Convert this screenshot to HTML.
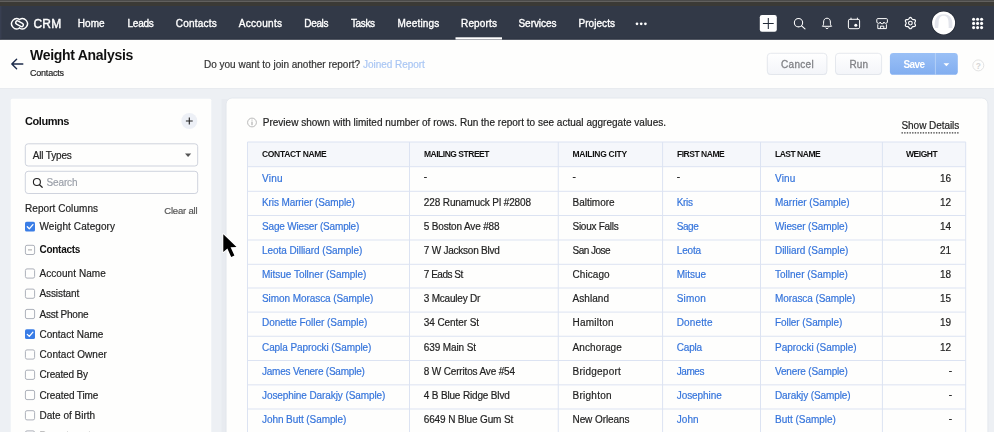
<!DOCTYPE html>
<html><head><meta charset="utf-8"><title>Weight Analysis</title>
<style>
html,body{margin:0;padding:0;}
body{width:994px;height:432px;overflow:hidden;background:#edf0f4;font-family:"Liberation Sans",sans-serif;position:relative;}
.t{position:absolute;white-space:nowrap;line-height:1.117;}
#txt{position:absolute;left:0;top:0;width:994px;height:432px;will-change:transform;}
#bg{position:absolute;left:0;top:0;}
</style></head><body>
<svg id="bg" width="994" height="432" viewBox="0 0 994 432">
<!-- top strip + nav -->
<rect x="0" y="0" width="994" height="1.3" fill="#4b4b4a"/>
<rect x="0" y="1.3" width="994" height="4.7" fill="#3b3a36"/>
<rect x="0" y="6" width="994" height="33.8" fill="#323947"/>
<rect x="0" y="6" width="1.5" height="33.8" fill="#383f51"/>
<rect x="0" y="38.9" width="994" height="0.9" fill="#1f2532"/>
<rect x="455.5" y="37.3" width="46.5" height="2.2" fill="#fff"/>
<!-- header -->
<rect x="0" y="39.8" width="994" height="48.4" fill="#fefefd"/>
<rect x="0" y="88" width="994" height="0.8" fill="#e6e9ee"/>
<!-- left panel -->
<rect x="10.75" y="98.75" width="200.5" height="340" rx="1.5" fill="#fefefd"/>
<!-- right panel -->
<rect x="221.5" y="99" width="8" height="340" fill="#e8ebf0"/>
<rect x="226.1" y="98" width="761.8" height="345" rx="6" fill="#fefefd" stroke="#e2e6ec" stroke-width="0.9"/>
<!-- table -->
<rect x="247.5" y="142" width="718.25" height="24.7" fill="#f5f7fb"/>
<g stroke="#dce3f2" stroke-width="1" fill="none">
<path d="M247.5 142H965.75M247.5 166.7H965.75"/>
<path d="M247.5 191.3H965.75M247.5 215.5H965.75M247.5 240.0H965.75M247.5 264.3H965.75M247.5 288.0H965.75M247.5 312.1H965.75M247.5 336.25H965.75M247.5 360.5H965.75M247.5 384.85H965.75M247.5 409.0H965.75"/>
<path d="M247.5 142V432M409.5 142V432M558.25 142V432M662.6 142V432M760.5 142V432M882.4 142V432M965.7 142V432"/>
</g>
<!-- show details dotted underline -->
<path d="M901.5 132.9H959.5" stroke="#3a3a3a" stroke-width="1.25" stroke-dasharray="1.4 1.25"/>
<!-- info icon -->
<circle cx="252" cy="122.5" r="4.4" fill="none" stroke="#a8a8a8" stroke-width="0.8"/>
<path d="M252 121.6V125.2M252 119.7V120.5" stroke="#999" stroke-width="0.9"/>
<!-- back arrow -->
<path d="M22.8 64H11.8M16.6 59.2L11.8 64L16.6 68.8" stroke="#1c2b4a" stroke-width="1.4" fill="none" stroke-linecap="round" stroke-linejoin="round"/>
<!-- buttons -->
<defs>
<linearGradient id="gb" x1="0" y1="0" x2="0" y2="1"><stop offset="0" stop-color="#ffffff"/><stop offset="1" stop-color="#f3f5f9"/></linearGradient>
<linearGradient id="gs" x1="0" y1="0" x2="0" y2="1"><stop offset="0" stop-color="#9ac0f6"/><stop offset="1" stop-color="#82aef0"/></linearGradient>
</defs>
<rect x="767.3" y="53.9" width="59.6" height="21.2" rx="3.4" fill="#eceef3"/>
<rect x="835.5" y="53.9" width="46.1" height="21.2" rx="3.4" fill="#eceef3"/>
<rect x="767.3" y="53.3" width="59.6" height="21.2" rx="3.4" fill="url(#gb)" stroke="#e0e3ea" stroke-width="0.8"/>
<rect x="835.5" y="53.3" width="46.1" height="21.2" rx="3.4" fill="url(#gb)" stroke="#e0e3ea" stroke-width="0.8"/>
<rect x="889.9" y="53" width="67.9" height="21.8" rx="3.4" fill="url(#gs)"/>
<path d="M935.4 53V74.8" stroke="#bdd5f8" stroke-width="0.8"/>
<path d="M943.5 63.2L946.4 66.3L949.3 63.2Z" fill="#fff"/>
<circle cx="978.3" cy="65.4" r="5.5" fill="none" stroke="#dfdfdf" stroke-width="0.9"/>
<text x="978.3" y="68.6" font-size="8.5" text-anchor="middle" fill="#d6d6d6" font-family="Liberation Sans" font-weight="700">?</text>
<!-- logo -->
<g fill="none" stroke="#fff" stroke-width="1.45" stroke-linecap="round" transform="translate(0.1,0.45)">
<path d="M19.4 19.04 A5.1 5.1 0 1 0 19.4 27.56"/>
<path d="M19.4 19.04 A5.1 5.1 0 1 1 19.4 27.56"/>
<rect x="15.3" y="21.6" width="8.2" height="3.4" rx="1.7" transform="rotate(30 19.4 23.3)"/>
</g>
<!-- nav dots -->
<circle cx="637" cy="23.8" r="1.35" fill="#fff"/><circle cx="641.2" cy="23.8" r="1.35" fill="#fff"/><circle cx="645.4" cy="23.8" r="1.35" fill="#fff"/>
<!-- plus btn -->
<rect x="759.8" y="15" width="17" height="16.8" rx="2.2" fill="#fff"/>
<path d="M768.3 18.1V28.9M762.9 23.5H773.7" stroke="#222a38" stroke-width="1.05"/>
<!-- search -->
<circle cx="798.5" cy="22.7" r="4.15" fill="none" stroke="#fff" stroke-width="1.05"/>
<path d="M801.6 25.8L805 28.9" stroke="#fff" stroke-width="1.15" stroke-linecap="round"/>
<!-- bell -->
<path d="M822.4 26.3 H831.6 C830.2 25 830.4 23.6 830.4 22 C830.4 19.6 829 18.2 827 18.2 C825 18.2 823.6 19.6 823.6 22 C823.6 23.6 823.8 25 822.4 26.3Z" fill="none" stroke="#fff" stroke-width="1" stroke-linejoin="round"/>
<path d="M825.4 27.6 a1.7 1.4 0 0 0 3.2 0" fill="none" stroke="#fff" stroke-width="1"/>
<!-- calendar -->
<rect x="848.4" y="19.3" width="11.2" height="9.4" rx="1.5" fill="none" stroke="#fff" stroke-width="1"/>
<path d="M851 17.7V19.6M857.4 17.7V19.6" stroke="#fff" stroke-width="1"/>
<circle cx="855.8" cy="25.3" r="1.55" fill="#fff"/>
<!-- store -->
<path d="M876.8 22V19.6 a1 1 0 0 1 1-1 H886.4 a1 1 0 0 1 1 1 V22 a1.8 1.8 0 0 1-3.5 0 a1.8 1.8 0 0 1-3.6 0 a1.8 1.8 0 0 1-3.5 0Z" fill="none" stroke="#fff" stroke-width="1"/>
<path d="M877.8 24.3V28.6H886.4V24.3M880.4 28.6V26.2H883.8V28.6" fill="none" stroke="#fff" stroke-width="1"/>
<!-- gear -->
<path d="M914.65 23.10 L914.73 22.72 L914.93 22.30 L915.18 21.82 L915.38 21.29 L915.44 20.75 L915.29 20.28 L914.95 19.91 L914.46 19.69 L913.90 19.60 L913.36 19.58 L912.89 19.54 L912.52 19.42 L912.24 19.16 L911.97 18.78 L911.68 18.32 L911.32 17.88 L910.88 17.56 L910.40 17.45 L909.92 17.56 L909.48 17.88 L909.12 18.32 L908.83 18.78 L908.56 19.16 L908.27 19.42 L907.91 19.54 L907.44 19.58 L906.90 19.60 L906.34 19.69 L905.85 19.91 L905.51 20.28 L905.36 20.75 L905.42 21.29 L905.62 21.82 L905.87 22.30 L906.07 22.72 L906.15 23.10 L906.07 23.48 L905.87 23.90 L905.62 24.38 L905.42 24.91 L905.36 25.45 L905.51 25.93 L905.85 26.29 L906.34 26.51 L906.90 26.60 L907.44 26.62 L907.91 26.66 L908.27 26.78 L908.56 27.04 L908.83 27.42 L909.12 27.88 L909.48 28.32 L909.92 28.64 L910.40 28.75 L910.88 28.64 L911.32 28.32 L911.68 27.88 L911.97 27.42 L912.24 27.04 L912.52 26.78 L912.89 26.66 L913.36 26.62 L913.90 26.60 L914.46 26.51 L914.95 26.29 L915.29 25.93 L915.44 25.45 L915.38 24.91 L915.18 24.38 L914.93 23.90 L914.73 23.48Z" fill="none" stroke="#fff" stroke-width="1.2" stroke-linejoin="round"/>
<circle cx="910.4" cy="23.1" r="1.85" fill="none" stroke="#fff" stroke-width="1.15"/>
<!-- avatar -->
<circle cx="943.6" cy="22.9" r="12.2" fill="#1f2532"/>
<circle cx="943.6" cy="22.9" r="11.5" fill="#fff"/>
<path d="M934.9 28 C934 20 936 14.2 943.6 14.2 C951.2 14.2 953.2 20 952.3 28 L948.6 28 C948.9 26 948.5 25 948.5 22 C948.5 18.4 946.8 15.7 943.6 15.7 C940.4 15.7 938.7 18.4 938.7 22 C938.7 25 938.3 26 938.2 28 Z" fill="#e3e5ec"/>
<!-- grid -->
<g fill="#fff">
<circle cx="973.6" cy="19.2" r="1.55"/><circle cx="977.6" cy="19.2" r="1.55"/><circle cx="981.6" cy="19.2" r="1.55"/><circle cx="973.6" cy="23.4" r="1.55"/><circle cx="977.6" cy="23.4" r="1.55"/><circle cx="981.6" cy="23.4" r="1.55"/><circle cx="973.6" cy="27.6" r="1.55"/><circle cx="977.6" cy="27.6" r="1.55"/><circle cx="981.6" cy="27.6" r="1.55"/>
</g>
<!-- sidebar widgets -->
<circle cx="189.3" cy="121" r="8" fill="#edf0f6"/>
<path d="M189.3 117.6V124.4M185.9 121H192.7" stroke="#222" stroke-width="1.1"/>
<rect x="25.3" y="143.8" width="172.4" height="22.2" rx="2.8" fill="#fefefd" stroke="#c9ced9" stroke-width="0.9"/>
<path d="M185 153.6L188.1 157L191.2 153.6Z" fill="#555"/>
<rect x="25.3" y="171.3" width="172.4" height="22.2" rx="2.8" fill="#fefefd" stroke="#c9ced9" stroke-width="0.9"/>
<circle cx="36.9" cy="182" r="3.5" fill="none" stroke="#222" stroke-width="1.1"/>
<path d="M39.5 184.7L42.2 187.3" stroke="#222" stroke-width="1.2" stroke-linecap="round"/>
<!-- checkboxes -->
<g>
<rect x="25" y="221.7" width="10" height="9.8" rx="1.6" fill="#3a7de6"/>
<path d="M27.3 226.8L29.3 228.8L32.9 224.6" fill="none" stroke="#fff" stroke-width="1.3" stroke-linecap="round" stroke-linejoin="round"/>
<rect x="25.4" y="245.3" width="9.2" height="9.2" rx="1.6" fill="#fefefd" stroke="#adb1ba" stroke-width="1"/>
<path d="M28 249.9H32" stroke="#999" stroke-width="0.9"/>
<rect x="25" y="329.3" width="10" height="9.8" rx="1.6" fill="#3a7de6"/>
<path d="M27.3 334.4L29.3 336.4L32.9 332.2" fill="none" stroke="#fff" stroke-width="1.3" stroke-linecap="round" stroke-linejoin="round"/>
</g>
<g fill="#fefefd" stroke="#adb1ba" stroke-width="1">
<rect x="25.4" y="268.9" width="9.2" height="9.2" rx="1.6"/>
<rect x="25.4" y="289.1" width="9.2" height="9.2" rx="1.6"/>
<rect x="25.4" y="309.4" width="9.2" height="9.2" rx="1.6"/>
<rect x="25.4" y="349.9" width="9.2" height="9.2" rx="1.6"/>
<rect x="25.4" y="370.2" width="9.2" height="9.2" rx="1.6"/>
<rect x="25.4" y="390.4" width="9.2" height="9.2" rx="1.6"/>
<rect x="25.4" y="410.7" width="9.2" height="9.2" rx="1.6"/>
<rect x="25.4" y="430.9" width="9.2" height="9.2" rx="1.6"/>
</g>
</svg>
<div id="txt">
<span class="t" id="t0" style="left:77.75px;top:17.83px;font-size:10px;font-weight:400;color:#fff;letter-spacing:0.046px;-webkit-text-stroke:0.35px #fff;">Home</span>
<span class="t" id="t1" style="left:127.50px;top:17.83px;font-size:10px;font-weight:400;color:#fff;letter-spacing:-0.249px;-webkit-text-stroke:0.35px #fff;">Leads</span>
<span class="t" id="t2" style="left:175.75px;top:17.83px;font-size:10px;font-weight:400;color:#fff;letter-spacing:0.220px;-webkit-text-stroke:0.35px #fff;">Contacts</span>
<span class="t" id="t3" style="left:238.75px;top:17.83px;font-size:10px;font-weight:400;color:#fff;letter-spacing:0.302px;-webkit-text-stroke:0.35px #fff;">Accounts</span>
<span class="t" id="t4" style="left:304.25px;top:17.83px;font-size:10px;font-weight:400;color:#fff;letter-spacing:-0.329px;-webkit-text-stroke:0.35px #fff;">Deals</span>
<span class="t" id="t5" style="left:351.00px;top:17.83px;font-size:10px;font-weight:400;color:#fff;letter-spacing:-0.390px;-webkit-text-stroke:0.35px #fff;">Tasks</span>
<span class="t" id="t6" style="left:397.50px;top:17.83px;font-size:10px;font-weight:400;color:#fff;letter-spacing:0.168px;-webkit-text-stroke:0.35px #fff;">Meetings</span>
<span class="t" id="t7" style="left:461.00px;top:17.83px;font-size:10px;font-weight:400;color:#fff;letter-spacing:0.164px;-webkit-text-stroke:0.35px #fff;">Reports</span>
<span class="t" id="t8" style="left:518.50px;top:17.83px;font-size:10px;font-weight:400;color:#fff;letter-spacing:-0.049px;-webkit-text-stroke:0.35px #fff;">Services</span>
<span class="t" id="t9" style="left:578.50px;top:17.83px;font-size:10px;font-weight:400;color:#fff;letter-spacing:0.054px;-webkit-text-stroke:0.35px #fff;">Projects</span>
<span class="t" id="t10" style="left:33.40px;top:17.64px;font-size:12px;font-weight:400;color:#fff;letter-spacing:0.234px;-webkit-text-stroke:0.4px #fff;">CRM</span>
<span class="t" id="t11" style="left:30.00px;top:48.24px;font-size:14px;font-weight:700;color:#111;letter-spacing:-0.292px;">Weight Analysis</span>
<span class="t" id="t12" style="left:30.00px;top:68.38px;font-size:9px;font-weight:400;color:#222;letter-spacing:-0.217px;-webkit-text-stroke:0.18px #222;">Contacts</span>
<span class="t" id="t13" style="left:204.00px;top:58.53px;font-size:10px;font-weight:400;color:#333;letter-spacing:-0.004px;-webkit-text-stroke:0.18px #333;">Do you want to join another report?</span>
<span class="t" id="t14" style="left:363.00px;top:58.53px;font-size:10px;font-weight:400;color:#a9c6f3;letter-spacing:-0.040px;-webkit-text-stroke:0.18px #a9c6f3;">Joined Report</span>
<span class="t" id="t15" style="left:781.00px;top:58.53px;font-size:10px;font-weight:400;color:#818286;letter-spacing:0.319px;-webkit-text-stroke:0.3px #818286;">Cancel</span>
<span class="t" id="t16" style="left:849.50px;top:58.53px;font-size:10px;font-weight:400;color:#818286;letter-spacing:0.108px;-webkit-text-stroke:0.3px #818286;">Run</span>
<span class="t" id="t17" style="left:903.50px;top:58.53px;font-size:10px;font-weight:700;color:#fff;letter-spacing:-0.598px;">Save</span>
<span class="t" id="t18" style="left:25.00px;top:115.18px;font-size:11px;font-weight:700;color:#111;letter-spacing:-0.448px;">Columns</span>
<span class="t" id="t19" style="left:32.75px;top:149.53px;font-size:10px;font-weight:400;color:#222;letter-spacing:-0.165px;-webkit-text-stroke:0.18px #222;">All Types</span>
<span class="t" id="t20" style="left:46.50px;top:177.03px;font-size:10px;font-weight:400;color:#9a9fa8;letter-spacing:-0.125px;-webkit-text-stroke:0.18px #9a9fa8;">Search</span>
<span class="t" id="t21" style="left:25.00px;top:203.23px;font-size:10px;font-weight:400;color:#222;letter-spacing:0.058px;-webkit-text-stroke:0.18px #222;">Report Columns</span>
<span class="t" id="t22" style="left:164.25px;top:205.70px;font-size:9.5px;font-weight:400;color:#555;letter-spacing:-0.186px;-webkit-text-stroke:0.18px #555;">Clear all</span>
<span class="t" id="t23" style="left:39.50px;top:221.13px;font-size:10px;font-weight:400;color:#222;letter-spacing:0.086px;-webkit-text-stroke:0.18px #222;">Weight Category</span>
<span class="t" id="t24" style="left:39.50px;top:244.43px;font-size:10px;font-weight:700;color:#111;letter-spacing:-0.282px;">Contacts</span>
<span class="t" id="t25" style="left:39.50px;top:268.03px;font-size:10px;font-weight:400;color:#222;letter-spacing:0.066px;-webkit-text-stroke:0.18px #222;">Account Name</span>
<span class="t" id="t26" style="left:39.50px;top:288.13px;font-size:10px;font-weight:400;color:#222;letter-spacing:-0.099px;-webkit-text-stroke:0.18px #222;">Assistant</span>
<span class="t" id="t27" style="left:39.50px;top:308.53px;font-size:10px;font-weight:400;color:#222;letter-spacing:-0.231px;-webkit-text-stroke:0.18px #222;">Asst Phone</span>
<span class="t" id="t28" style="left:39.50px;top:328.73px;font-size:10px;font-weight:400;color:#222;letter-spacing:-0.009px;-webkit-text-stroke:0.18px #222;">Contact Name</span>
<span class="t" id="t29" style="left:39.50px;top:349.03px;font-size:10px;font-weight:400;color:#222;letter-spacing:0.053px;-webkit-text-stroke:0.18px #222;">Contact Owner</span>
<span class="t" id="t30" style="left:39.50px;top:369.33px;font-size:10px;font-weight:400;color:#222;letter-spacing:-0.169px;-webkit-text-stroke:0.18px #222;">Created By</span>
<span class="t" id="t31" style="left:39.50px;top:389.53px;font-size:10px;font-weight:400;color:#222;letter-spacing:-0.104px;-webkit-text-stroke:0.18px #222;">Created Time</span>
<span class="t" id="t32" style="left:39.50px;top:409.83px;font-size:10px;font-weight:400;color:#222;letter-spacing:-0.002px;-webkit-text-stroke:0.18px #222;">Date of Birth</span>
<span class="t" id="t33" style="left:39.50px;top:430.13px;font-size:10px;font-weight:400;color:#b5b5b5;letter-spacing:-0.108px;-webkit-text-stroke:0.18px #b5b5b5;">Department</span>
<span class="t" id="t34" style="left:262.75px;top:117.03px;font-size:10px;font-weight:400;color:#222;letter-spacing:0.010px;-webkit-text-stroke:0.18px #222;">Preview shown with limited number of rows. Run the report to see actual aggregate values.</span>
<span class="t" id="t35" style="left:901.50px;top:119.73px;font-size:10px;font-weight:400;color:#222;letter-spacing:-0.055px;-webkit-text-stroke:0.18px #222;">Show Details</span>
<span class="t" id="t36" style="left:262.00px;top:149.95px;font-size:8.5px;font-weight:700;color:#111;letter-spacing:-0.331px;">CONTACT NAME</span>
<span class="t" id="t37" style="left:424.00px;top:149.95px;font-size:8.5px;font-weight:700;color:#111;letter-spacing:-0.487px;">MAILING STREET</span>
<span class="t" id="t38" style="left:572.50px;top:149.95px;font-size:8.5px;font-weight:700;color:#111;letter-spacing:-0.267px;">MAILING CITY</span>
<span class="t" id="t39" style="left:677.00px;top:149.95px;font-size:8.5px;font-weight:700;color:#111;letter-spacing:-0.475px;">FIRST NAME</span>
<span class="t" id="t40" style="left:775.00px;top:149.95px;font-size:8.5px;font-weight:700;color:#111;letter-spacing:-0.489px;">LAST NAME</span>
<span class="t" id="t41" style="left:906.00px;top:149.95px;font-size:8.5px;font-weight:700;color:#111;letter-spacing:-0.461px;">WEIGHT</span>
<span class="t" id="t42" style="left:262.00px;top:172.53px;font-size:10px;font-weight:400;color:#3574db;letter-spacing:0.243px;-webkit-text-stroke:0.18px #3574db;">Vinu</span>
<span class="t" id="t43" style="left:423.75px;top:171.43px;font-size:10px;font-weight:400;color:#222;letter-spacing:0.000px;-webkit-text-stroke:0.18px #222;">-</span>
<span class="t" id="t44" style="left:572.50px;top:171.43px;font-size:10px;font-weight:400;color:#222;letter-spacing:0.000px;-webkit-text-stroke:0.18px #222;">-</span>
<span class="t" id="t45" style="left:676.75px;top:171.43px;font-size:10px;font-weight:400;color:#222;letter-spacing:0.000px;-webkit-text-stroke:0.18px #222;">-</span>
<span class="t" id="t46" style="left:775.00px;top:172.53px;font-size:10px;font-weight:400;color:#3574db;letter-spacing:0.159px;-webkit-text-stroke:0.18px #3574db;">Vinu</span>
<span class="t" id="t47" style="left:940.09px;top:172.53px;font-size:10px;font-weight:400;color:#222;letter-spacing:-0.150px;-webkit-text-stroke:0.18px #222;">16</span>
<span class="t" id="t48" style="left:262.00px;top:196.67px;font-size:10px;font-weight:400;color:#3574db;letter-spacing:-0.109px;-webkit-text-stroke:0.18px #3574db;">Kris Marrier (Sample)</span>
<span class="t" id="t49" style="left:423.75px;top:196.67px;font-size:10px;font-weight:400;color:#222;letter-spacing:-0.110px;-webkit-text-stroke:0.18px #222;">228 Runamuck Pl #2808</span>
<span class="t" id="t50" style="left:572.50px;top:196.67px;font-size:10px;font-weight:400;color:#222;letter-spacing:-0.022px;-webkit-text-stroke:0.18px #222;">Baltimore</span>
<span class="t" id="t51" style="left:676.75px;top:196.67px;font-size:10px;font-weight:400;color:#3574db;letter-spacing:-0.324px;-webkit-text-stroke:0.18px #3574db;">Kris</span>
<span class="t" id="t52" style="left:775.00px;top:196.67px;font-size:10px;font-weight:400;color:#3574db;letter-spacing:-0.029px;-webkit-text-stroke:0.18px #3574db;">Marrier (Sample)</span>
<span class="t" id="t53" style="left:940.09px;top:196.67px;font-size:10px;font-weight:400;color:#222;letter-spacing:-0.150px;-webkit-text-stroke:0.18px #222;">12</span>
<span class="t" id="t54" style="left:262.00px;top:220.81px;font-size:10px;font-weight:400;color:#3574db;letter-spacing:-0.172px;-webkit-text-stroke:0.18px #3574db;">Sage Wieser (Sample)</span>
<span class="t" id="t55" style="left:423.75px;top:220.81px;font-size:10px;font-weight:400;color:#222;letter-spacing:-0.164px;-webkit-text-stroke:0.18px #222;">5 Boston Ave #88</span>
<span class="t" id="t56" style="left:572.50px;top:220.81px;font-size:10px;font-weight:400;color:#222;letter-spacing:-0.266px;-webkit-text-stroke:0.18px #222;">Sioux Falls</span>
<span class="t" id="t57" style="left:676.75px;top:220.81px;font-size:10px;font-weight:400;color:#3574db;letter-spacing:-0.431px;-webkit-text-stroke:0.18px #3574db;">Sage</span>
<span class="t" id="t58" style="left:775.00px;top:220.81px;font-size:10px;font-weight:400;color:#3574db;letter-spacing:-0.116px;-webkit-text-stroke:0.18px #3574db;">Wieser (Sample)</span>
<span class="t" id="t59" style="left:940.09px;top:220.81px;font-size:10px;font-weight:400;color:#222;letter-spacing:-0.150px;-webkit-text-stroke:0.18px #222;">14</span>
<span class="t" id="t60" style="left:262.00px;top:244.95px;font-size:10px;font-weight:400;color:#3574db;letter-spacing:-0.063px;-webkit-text-stroke:0.18px #3574db;">Leota Dilliard (Sample)</span>
<span class="t" id="t61" style="left:423.75px;top:244.95px;font-size:10px;font-weight:400;color:#222;letter-spacing:-0.227px;-webkit-text-stroke:0.18px #222;">7 W Jackson Blvd</span>
<span class="t" id="t62" style="left:572.50px;top:244.95px;font-size:10px;font-weight:400;color:#222;letter-spacing:-0.519px;-webkit-text-stroke:0.18px #222;">San Jose</span>
<span class="t" id="t63" style="left:676.75px;top:244.95px;font-size:10px;font-weight:400;color:#3574db;letter-spacing:-0.178px;-webkit-text-stroke:0.18px #3574db;">Leota</span>
<span class="t" id="t64" style="left:775.00px;top:244.95px;font-size:10px;font-weight:400;color:#3574db;letter-spacing:-0.036px;-webkit-text-stroke:0.18px #3574db;">Dilliard (Sample)</span>
<span class="t" id="t65" style="left:940.09px;top:244.95px;font-size:10px;font-weight:400;color:#222;letter-spacing:-0.150px;-webkit-text-stroke:0.18px #222;">21</span>
<span class="t" id="t66" style="left:262.00px;top:269.09px;font-size:10px;font-weight:400;color:#3574db;letter-spacing:-0.021px;-webkit-text-stroke:0.18px #3574db;">Mitsue Tollner (Sample)</span>
<span class="t" id="t67" style="left:423.75px;top:269.09px;font-size:10px;font-weight:400;color:#222;letter-spacing:-0.479px;-webkit-text-stroke:0.18px #222;">7 Eads St</span>
<span class="t" id="t68" style="left:572.50px;top:269.09px;font-size:10px;font-weight:400;color:#222;letter-spacing:0.062px;-webkit-text-stroke:0.18px #222;">Chicago</span>
<span class="t" id="t69" style="left:676.75px;top:269.09px;font-size:10px;font-weight:400;color:#3574db;letter-spacing:-0.028px;-webkit-text-stroke:0.18px #3574db;">Mitsue</span>
<span class="t" id="t70" style="left:775.00px;top:269.09px;font-size:10px;font-weight:400;color:#3574db;letter-spacing:0.002px;-webkit-text-stroke:0.18px #3574db;">Tollner (Sample)</span>
<span class="t" id="t71" style="left:940.09px;top:269.09px;font-size:10px;font-weight:400;color:#222;letter-spacing:-0.150px;-webkit-text-stroke:0.18px #222;">18</span>
<span class="t" id="t72" style="left:262.00px;top:293.23px;font-size:10px;font-weight:400;color:#3574db;letter-spacing:-0.071px;-webkit-text-stroke:0.18px #3574db;">Simon Morasca (Sample)</span>
<span class="t" id="t73" style="left:423.75px;top:293.23px;font-size:10px;font-weight:400;color:#222;letter-spacing:-0.211px;-webkit-text-stroke:0.18px #222;">3 Mcauley Dr</span>
<span class="t" id="t74" style="left:572.50px;top:293.23px;font-size:10px;font-weight:400;color:#222;letter-spacing:0.071px;-webkit-text-stroke:0.18px #222;">Ashland</span>
<span class="t" id="t75" style="left:676.75px;top:293.23px;font-size:10px;font-weight:400;color:#3574db;letter-spacing:0.179px;-webkit-text-stroke:0.18px #3574db;">Simon</span>
<span class="t" id="t76" style="left:775.00px;top:293.23px;font-size:10px;font-weight:400;color:#3574db;letter-spacing:-0.091px;-webkit-text-stroke:0.18px #3574db;">Morasca (Sample)</span>
<span class="t" id="t77" style="left:940.09px;top:293.23px;font-size:10px;font-weight:400;color:#222;letter-spacing:-0.150px;-webkit-text-stroke:0.18px #222;">15</span>
<span class="t" id="t78" style="left:262.00px;top:317.37px;font-size:10px;font-weight:400;color:#3574db;letter-spacing:-0.037px;-webkit-text-stroke:0.18px #3574db;">Donette Foller (Sample)</span>
<span class="t" id="t79" style="left:423.75px;top:317.37px;font-size:10px;font-weight:400;color:#222;letter-spacing:-0.079px;-webkit-text-stroke:0.18px #222;">34 Center St</span>
<span class="t" id="t80" style="left:572.50px;top:317.37px;font-size:10px;font-weight:400;color:#222;letter-spacing:0.229px;-webkit-text-stroke:0.18px #222;">Hamilton</span>
<span class="t" id="t81" style="left:676.75px;top:317.37px;font-size:10px;font-weight:400;color:#3574db;letter-spacing:0.131px;-webkit-text-stroke:0.18px #3574db;">Donette</span>
<span class="t" id="t82" style="left:775.00px;top:317.37px;font-size:10px;font-weight:400;color:#3574db;letter-spacing:-0.073px;-webkit-text-stroke:0.18px #3574db;">Foller (Sample)</span>
<span class="t" id="t83" style="left:940.09px;top:317.37px;font-size:10px;font-weight:400;color:#222;letter-spacing:-0.150px;-webkit-text-stroke:0.18px #222;">19</span>
<span class="t" id="t84" style="left:262.00px;top:341.51px;font-size:10px;font-weight:400;color:#3574db;letter-spacing:-0.083px;-webkit-text-stroke:0.18px #3574db;">Capla Paprocki (Sample)</span>
<span class="t" id="t85" style="left:423.75px;top:341.51px;font-size:10px;font-weight:400;color:#222;letter-spacing:-0.109px;-webkit-text-stroke:0.18px #222;">639 Main St</span>
<span class="t" id="t86" style="left:572.50px;top:341.51px;font-size:10px;font-weight:400;color:#222;letter-spacing:0.118px;-webkit-text-stroke:0.18px #222;">Anchorage</span>
<span class="t" id="t87" style="left:676.75px;top:341.51px;font-size:10px;font-weight:400;color:#3574db;letter-spacing:-0.204px;-webkit-text-stroke:0.18px #3574db;">Capla</span>
<span class="t" id="t88" style="left:775.00px;top:341.51px;font-size:10px;font-weight:400;color:#3574db;letter-spacing:-0.042px;-webkit-text-stroke:0.18px #3574db;">Paprocki (Sample)</span>
<span class="t" id="t89" style="left:940.09px;top:341.51px;font-size:10px;font-weight:400;color:#222;letter-spacing:-0.150px;-webkit-text-stroke:0.18px #222;">12</span>
<span class="t" id="t90" style="left:262.00px;top:365.65px;font-size:10px;font-weight:400;color:#3574db;letter-spacing:-0.222px;-webkit-text-stroke:0.18px #3574db;">James Venere (Sample)</span>
<span class="t" id="t91" style="left:423.75px;top:365.65px;font-size:10px;font-weight:400;color:#222;letter-spacing:-0.160px;-webkit-text-stroke:0.18px #222;">8 W Cerritos Ave #54</span>
<span class="t" id="t92" style="left:572.50px;top:365.65px;font-size:10px;font-weight:400;color:#222;letter-spacing:0.238px;-webkit-text-stroke:0.18px #222;">Bridgeport</span>
<span class="t" id="t93" style="left:676.75px;top:365.65px;font-size:10px;font-weight:400;color:#3574db;letter-spacing:-0.426px;-webkit-text-stroke:0.18px #3574db;">James</span>
<span class="t" id="t94" style="left:775.00px;top:365.65px;font-size:10px;font-weight:400;color:#3574db;letter-spacing:-0.158px;-webkit-text-stroke:0.18px #3574db;">Venere (Sample)</span>
<span class="t" id="t95" style="left:948.75px;top:364.55px;font-size:10px;font-weight:400;color:#222;letter-spacing:0.000px;-webkit-text-stroke:0.18px #222;">-</span>
<span class="t" id="t96" style="left:262.00px;top:389.79px;font-size:10px;font-weight:400;color:#3574db;letter-spacing:-0.091px;-webkit-text-stroke:0.18px #3574db;">Josephine Darakjy (Sample)</span>
<span class="t" id="t97" style="left:423.75px;top:389.79px;font-size:10px;font-weight:400;color:#222;letter-spacing:-0.160px;-webkit-text-stroke:0.18px #222;">4 B Blue Ridge Blvd</span>
<span class="t" id="t98" style="left:572.50px;top:389.79px;font-size:10px;font-weight:400;color:#222;letter-spacing:0.259px;-webkit-text-stroke:0.18px #222;">Brighton</span>
<span class="t" id="t99" style="left:676.75px;top:389.79px;font-size:10px;font-weight:400;color:#3574db;letter-spacing:-0.066px;-webkit-text-stroke:0.18px #3574db;">Josephine</span>
<span class="t" id="t100" style="left:775.00px;top:389.79px;font-size:10px;font-weight:400;color:#3574db;letter-spacing:-0.111px;-webkit-text-stroke:0.18px #3574db;">Darakjy (Sample)</span>
<span class="t" id="t101" style="left:948.75px;top:388.69px;font-size:10px;font-weight:400;color:#222;letter-spacing:0.000px;-webkit-text-stroke:0.18px #222;">-</span>
<span class="t" id="t102" style="left:262.00px;top:413.93px;font-size:10px;font-weight:400;color:#3574db;letter-spacing:-0.074px;-webkit-text-stroke:0.18px #3574db;">John Butt (Sample)</span>
<span class="t" id="t103" style="left:423.75px;top:413.93px;font-size:10px;font-weight:400;color:#222;letter-spacing:-0.129px;-webkit-text-stroke:0.18px #222;">6649 N Blue Gum St</span>
<span class="t" id="t104" style="left:572.50px;top:413.93px;font-size:10px;font-weight:400;color:#222;letter-spacing:-0.080px;-webkit-text-stroke:0.18px #222;">New Orleans</span>
<span class="t" id="t105" style="left:676.75px;top:413.93px;font-size:10px;font-weight:400;color:#3574db;letter-spacing:0.042px;-webkit-text-stroke:0.18px #3574db;">John</span>
<span class="t" id="t106" style="left:775.00px;top:413.93px;font-size:10px;font-weight:400;color:#3574db;letter-spacing:-0.025px;-webkit-text-stroke:0.18px #3574db;">Butt (Sample)</span>
<span class="t" id="t107" style="left:948.75px;top:412.83px;font-size:10px;font-weight:400;color:#222;letter-spacing:0.000px;-webkit-text-stroke:0.18px #222;">-</span>
</div>
<svg style="position:absolute;left:0;top:0" width="994" height="432" viewBox="0 0 994 432">
<!-- mouse cursor -->
<path d="M223.3 234.2 L223.3 252.1 L227.4 248.4 L231.2 257 L234.4 255.6 L230.6 247.2 L236.5 247 Z" fill="#000" stroke="#fff" stroke-width="1.7" stroke-linejoin="round" paint-order="stroke"/>
</svg>
</body></html>
